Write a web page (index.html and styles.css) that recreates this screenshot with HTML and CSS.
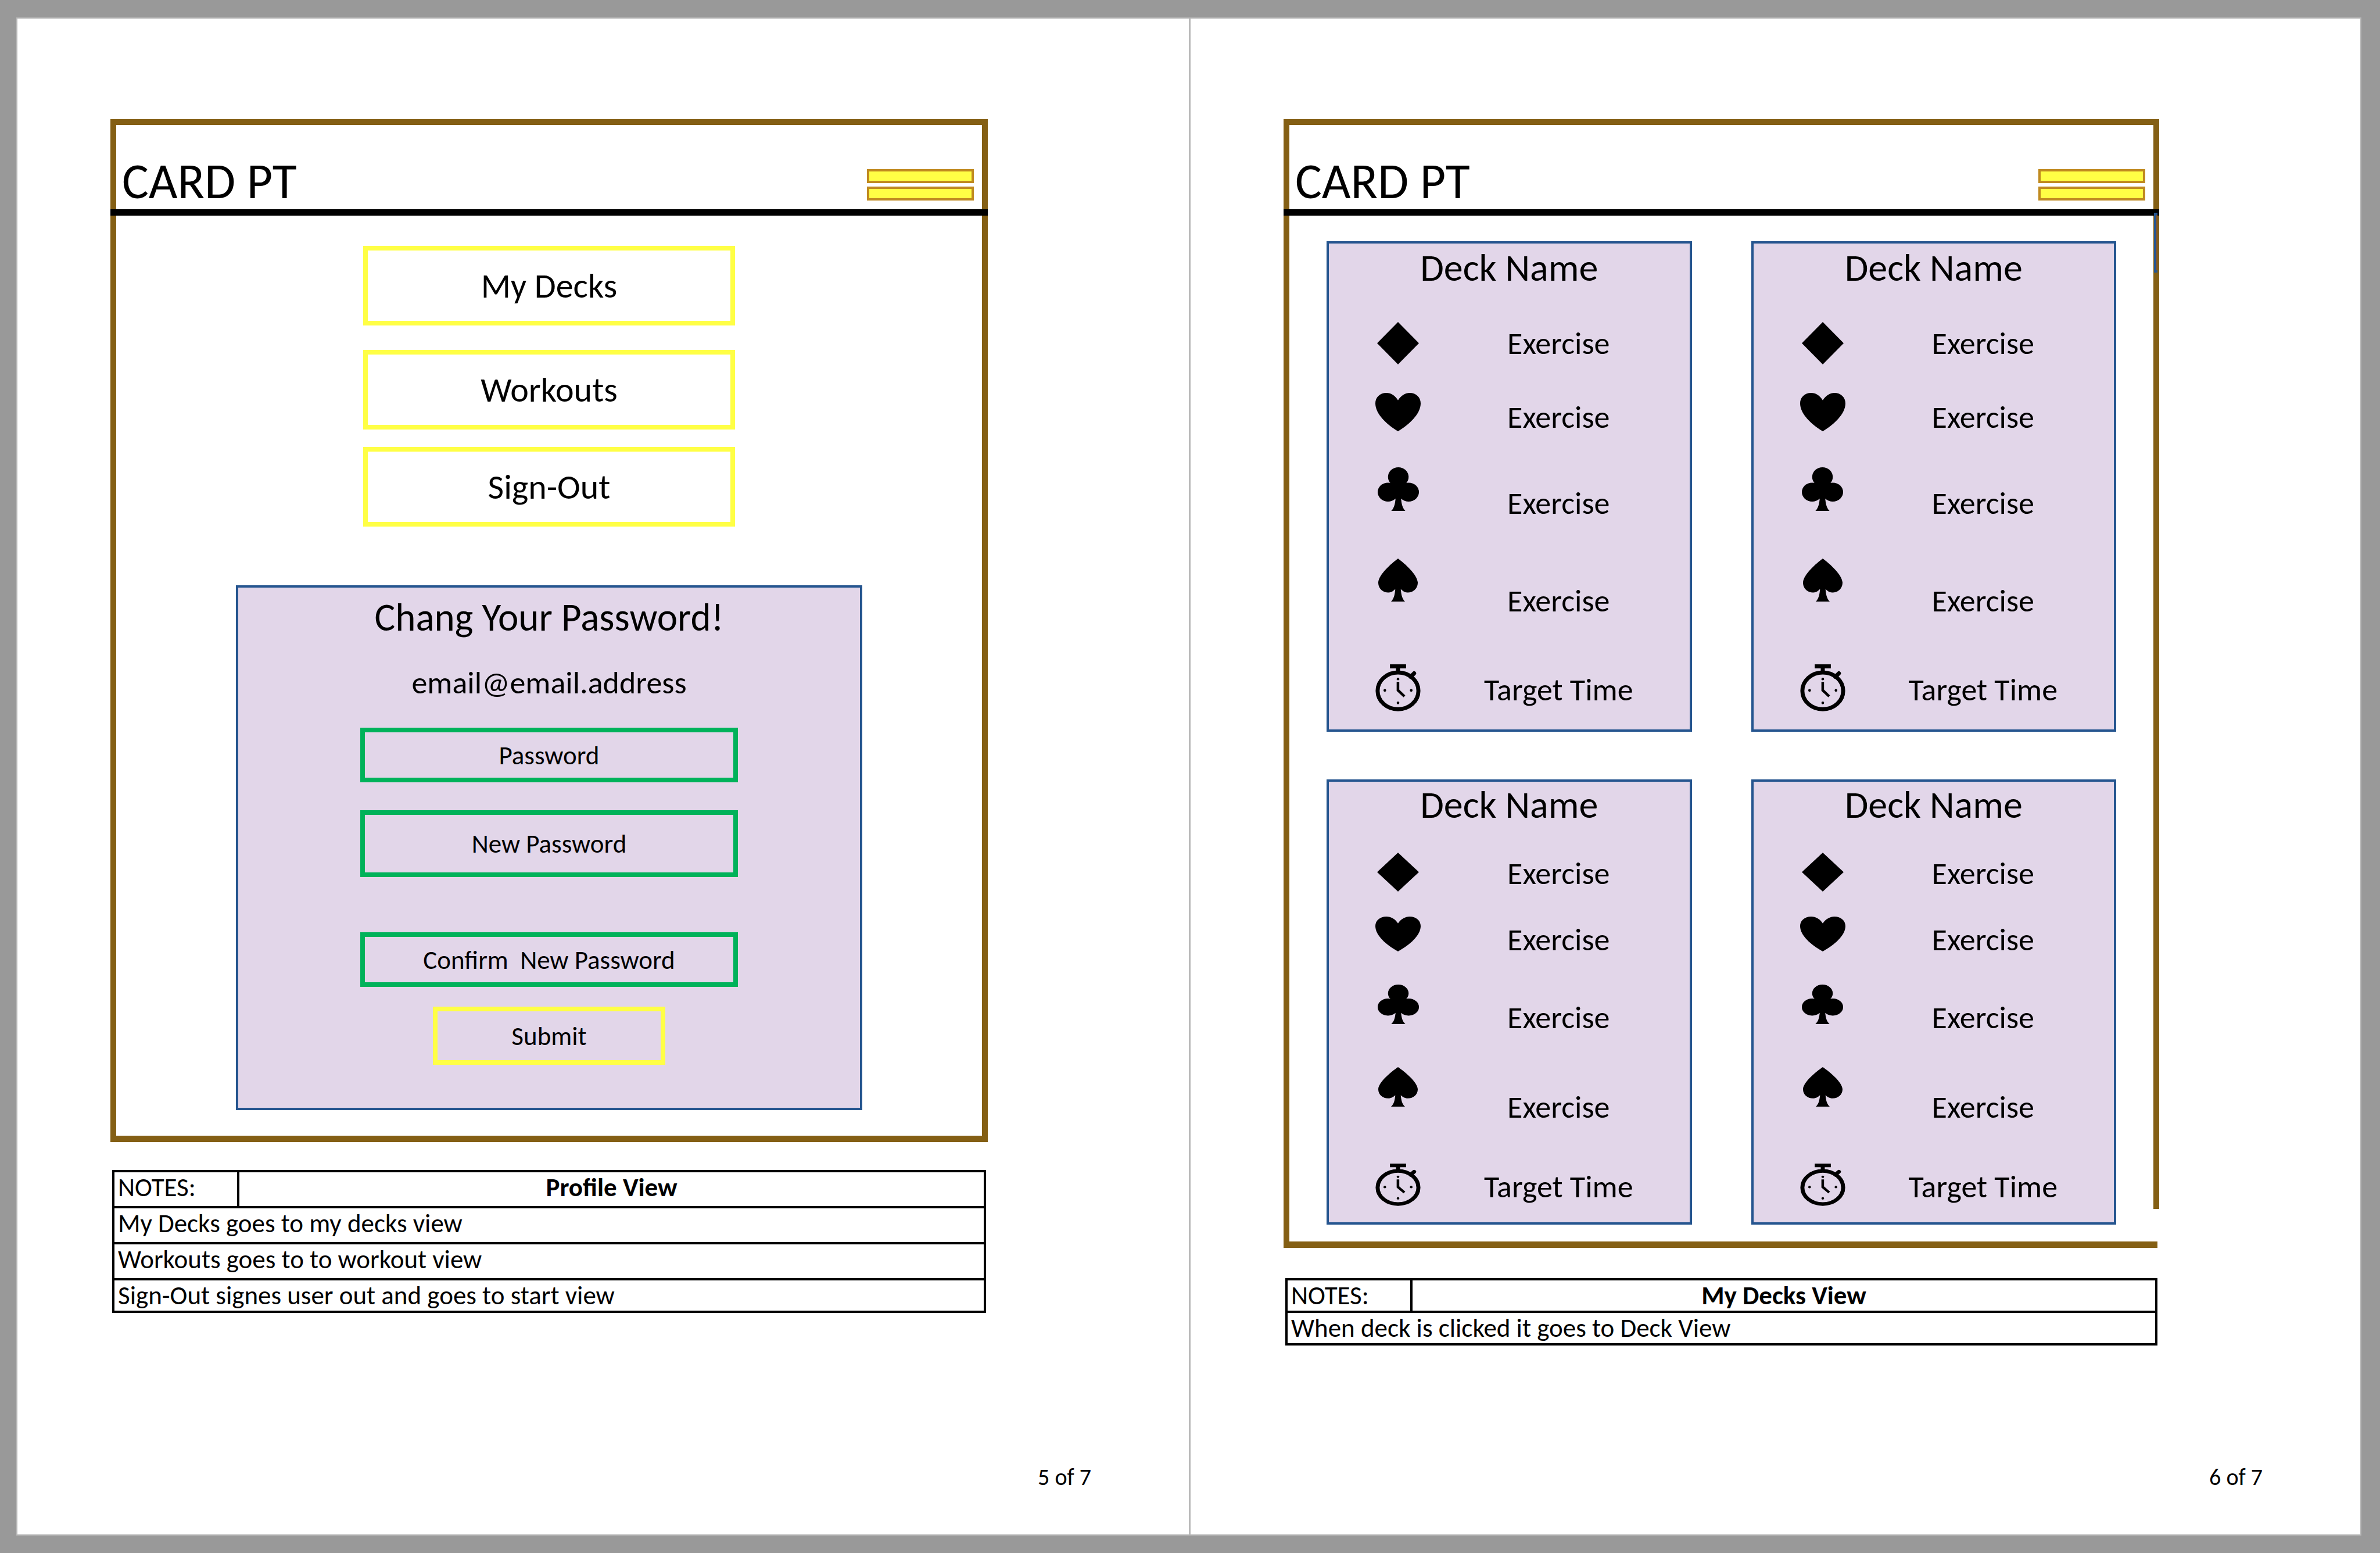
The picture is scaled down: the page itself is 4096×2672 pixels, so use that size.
FILE: index.html
```html
<!DOCTYPE html>
<html lang="en">
<head>
<meta charset="utf-8">
<title>Card PT</title>
<link rel="stylesheet" href="styles.css">
</head>
<body>
<svg class="defs" aria-hidden="true">
  <symbol id="diamond" viewBox="0 0 84 84" preserveAspectRatio="none"><path d="M42 0L84 42L42 84L0 42Z"/></symbol>
  <symbol id="heart" viewBox="0 0 90 77" preserveAspectRatio="none"><path d="M45 15C51 5 60 0 68 0C81 0 90 9 90 21C90 42 68 63 45 77C22 63 0 42 0 21C0 9 9 0 22 0C31 0 39 5 45 15Z"/></symbol>
  <symbol id="club" viewBox="0 0 82 87" preserveAspectRatio="none"><ellipse cx="41" cy="19.2" rx="20.500" ry="19.2"/><ellipse cx="20.500" cy="49.500" rx="20.500" ry="18.800"/><ellipse cx="61.500" cy="49.500" rx="20.500" ry="18.800"/><path d="M26 31H56L60 56L46.500 62.500C47.500 74 49.500 81 55 87H27C32.500 81 34.500 74 35.500 62.500L22 56Z"/></symbol>
  <symbol id="spade" viewBox="0 0 79 86" preserveAspectRatio="none"><path d="M39.500 0C53 10 78 32 79 48C79 60 70 68 59 68C53 68 49 65 45 61C46 73 48 81 53.500 86H25.500C31 81 33 73 34 61C30 65 26 68 20 68C9 68 0 60 0 48C1 32 26 10 39.500 0Z"/></symbol>
  <symbol id="watch" viewBox="0 0 90 94" preserveAspectRatio="none"><path d="M29 0H61V8H49V14H41V8H29Z"/><ellipse cx="45" cy="53" rx="40.500" ry="36.700" class="ring"/><path d="M70 25L77 18" class="knob"/><path d="M42.300 35H47.500V50.500L59.500 62L56 66L42.300 53Z"/><circle cx="45" cy="29.300" r="2.700"/><circle cx="45" cy="77" r="2.700"/><circle cx="18.800" cy="52" r="2.700"/><circle cx="71.200" cy="52" r="2.700"/></symbol>
</svg>

<main class="spread">
  <section class="page">
    <div class="sheet">
      <div class="frame">
        <header class="bar">
          <h1>CARD PT</h1>
          <button class="menu" type="button" aria-label="Menu"><span></span><span></span></button>
        </header>
        <div class="profile">
          <nav class="actions">
            <button class="action" type="button">My Decks</button>
            <button class="action" type="button">Workouts</button>
            <button class="action" type="button">Sign-Out</button>
          </nav>
          <form class="panel">
            <h2>Chang Your Password!</h2>
            <p class="email">email@email.address</p>
            <input class="field" type="password" aria-label="Password" placeholder="Password">
            <input class="field field-new" type="password" aria-label="New Password" placeholder="New Password">
            <input class="field" type="password" aria-label="Confirm New Password" placeholder="Confirm&nbsp; New Password">
            <button class="submit" type="button">Submit</button>
          </form>
        </div>
      </div>
      <table class="notes">
        <colgroup><col class="key"><col></colgroup>
        <tr class="tall"><td>NOTES:</td><th>Profile View</th></tr>
        <tr class="tall"><td colspan="2">My Decks goes to my decks view</td></tr>
        <tr class="tall"><td colspan="2">Workouts goes to to workout view</td></tr>
        <tr><td colspan="2">Sign-Out signes user out and goes to start view</td></tr>
      </table>
    </div>
    <footer>5 of 7</footer>
  </section>

  <section class="page">
    <div class="sheet">
      <div class="frame frame-open">
        <header class="bar">
          <h1>CARD PT</h1>
          <button class="menu" type="button" aria-label="Menu"><span></span><span></span></button>
        </header>
        <i class="marker"></i>
        <div class="decks">
          <article class="deck">
            <h2>Deck Name</h2>
            <ul>
              <li><svg class="diamond"><use href="#diamond"/></svg><span>Exercise</span></li>
              <li><svg class="heart"><use href="#heart"/></svg><span>Exercise</span></li>
              <li><svg class="club"><use href="#club"/></svg><span>Exercise</span></li>
              <li><svg class="spade"><use href="#spade"/></svg><span>Exercise</span></li>
              <li><svg class="watch"><use href="#watch"/></svg><span>Target Time</span></li>
            </ul>
          </article>
          <article class="deck">
            <h2>Deck Name</h2>
            <ul>
              <li><svg class="diamond"><use href="#diamond"/></svg><span>Exercise</span></li>
              <li><svg class="heart"><use href="#heart"/></svg><span>Exercise</span></li>
              <li><svg class="club"><use href="#club"/></svg><span>Exercise</span></li>
              <li><svg class="spade"><use href="#spade"/></svg><span>Exercise</span></li>
              <li><svg class="watch"><use href="#watch"/></svg><span>Target Time</span></li>
            </ul>
          </article>
          <article class="deck short">
            <h2>Deck Name</h2>
            <ul>
              <li><svg class="diamond"><use href="#diamond"/></svg><span>Exercise</span></li>
              <li><svg class="heart"><use href="#heart"/></svg><span>Exercise</span></li>
              <li><svg class="club"><use href="#club"/></svg><span>Exercise</span></li>
              <li><svg class="spade"><use href="#spade"/></svg><span>Exercise</span></li>
              <li><svg class="watch"><use href="#watch"/></svg><span>Target Time</span></li>
            </ul>
          </article>
          <article class="deck short">
            <h2>Deck Name</h2>
            <ul>
              <li><svg class="diamond"><use href="#diamond"/></svg><span>Exercise</span></li>
              <li><svg class="heart"><use href="#heart"/></svg><span>Exercise</span></li>
              <li><svg class="club"><use href="#club"/></svg><span>Exercise</span></li>
              <li><svg class="spade"><use href="#spade"/></svg><span>Exercise</span></li>
              <li><svg class="watch"><use href="#watch"/></svg><span>Target Time</span></li>
            </ul>
          </article>
        </div>
      </div>
      <table class="notes">
        <colgroup><col class="key"><col></colgroup>
        <tr><td>NOTES:</td><th>My Decks View</th></tr>
        <tr><td colspan="2">When deck is clicked it goes to Deck View</td></tr>
      </table>
    </div>
    <footer>6 of 7</footer>
  </section>
</main>
</body>
</html>
```

FILE: styles.css
```css
:root {
  --brown: #845f14;
  --yellow: #ffff45;
  --green: #00b25a;
  --blue: #25558f;
  --lilac: #e2d6e9;
}

* { box-sizing: border-box; }

body {
  margin: 0;
  padding: 30px 32px 30px 28px;
  background: #999;
  color: #000;
  font-family: Carlito, Lato, sans-serif;
  font-size: 45px;
}

h1, h2, p, ul { margin: 0; padding: 0; font-weight: 400; }
ul { list-style: none; }
button, input { font: inherit; color: inherit; background: none; padding: 0; border-radius: 0; }

.defs { position: absolute; width: 0; height: 0; }

.spread {
  display: grid;
  grid-template-columns: 1fr 1fr;
  min-height: calc(100vh - 60px);
  border: 2px solid #b8b8b8;
  background: #fff;
}

.page {
  display: flex;
  flex-direction: column;
  padding: 173px 168px 76px 160px;
}
.page + .page { border-left: 3px solid #b8b8b8; }

.sheet { margin-right: 178px; }

.frame {
  position: relative;
  border: 10px solid var(--brown);
  border-bottom-width: 11px;
}

.bar {
  display: flex;
  justify-content: space-between;
  align-items: flex-end;
  margin: 0 -10px;
  padding: 53px 24px 4px 20px;
  border-bottom: 11px solid #000;
}
.bar h1 { font-size: 86px; line-height: 88px; }

.menu { display: grid; gap: 6px; border: 0; width: 184px; margin-bottom: 11px; }
.menu span { height: 24px; border: 4px solid #c08a20; background: var(--yellow); }

.profile {
  display: flex;
  flex-direction: column;
  align-items: center;
  padding: 52px 0 44px;
}

.actions { display: flex; flex-direction: column; gap: 30px; width: 43%; margin-bottom: 101px; }
.action { height: 137px; border: 8px solid var(--yellow); font-size: 60px; }
.action:first-child { margin-bottom: 12px; }

.panel {
  display: flex;
  flex-direction: column;
  align-items: center;
  width: 1078px;
  max-width: 100%;
  padding: 11px 0 74px;
  border: 4px solid var(--blue);
  background: var(--lilac);
}
.panel h2 { font-size: 67px; line-height: 80px; }
.email { margin: 41px 0 45px; font-size: 54px; line-height: 64px; }
.field { width: 650px; height: 94px; border: 8px solid var(--green); text-align: center; }
.field::placeholder { color: #000; opacity: 1; white-space: pre; }
.field-new { height: 115px; margin: 48px 0 95px; }
.submit { width: 400px; height: 100px; margin-top: 34px; border: 8px solid var(--yellow); }

.notes {
  width: calc(100% - 6px);
  margin: 48px 3px 0;
  border-collapse: collapse;
  table-layout: fixed;
}
.frame-open + .notes { margin-top: 52px; }
.key { width: 215px; }
.notes tr { height: 56px; }
.notes .tall { height: 62px; }
.notes td, .notes th {
  padding: 0 6px;
  border: 4px solid #000;
  line-height: 52px;
  text-align: left;
  vertical-align: top;
}
.notes th { text-align: center; }

footer { margin-top: auto; font-size: 40px; line-height: 44px; text-align: right; }

/* The right rule stops short of the bottom one. */
.frame-open {
  clip-path: polygon(0 0, 100% 0, 100% calc(100% - 67px), calc(100% - 11px) calc(100% - 67px),
    calc(100% - 11px) calc(100% - 11px), calc(100% - 3px) calc(100% - 11px), calc(100% - 3px) 100%, 0 100%);
}
.marker {
  position: absolute;
  top: 151px;
  right: -7px;
  width: 6px;
  height: 103px;
  border: 4px solid var(--blue);
  border-right: 0;
  background: #84552a;
}

.decks {
  display: grid;
  grid-template-columns: 1fr 1fr;
  gap: 82px 102px;
  padding: 44px 64px 29px;
}
.deck {
  padding-top: 2px;
  border: 4px solid var(--blue);
  background: var(--lilac);
}
.deck h2 { font-size: 66px; line-height: 80px; text-align: center; }
.deck ul { display: grid; grid-template-rows: 122px 128px 157px 182px 112px; padding-top: 53px; }
.deck li {
  display: grid;
  grid-template-columns: 78px 1fr;
  column-gap: 72px;
  align-items: start;
  justify-items: center;
  padding: 0 60px 0 80px;
}
.deck li span { font-size: 54px; line-height: 64px; white-space: nowrap; }
.diamond { width: 72px; height: 73px; }
.heart { width: 78px; height: 66px; }
.club { width: 71px; height: 75px; }
.spade { width: 68px; height: 74px; }
.watch { width: 78px; height: 81px; }
.ring { fill: none; stroke: #000; stroke-width: 8px; }
.knob { stroke: #000; stroke-width: 8px; stroke-linecap: round; }
.diamond + span { margin-top: 5px; }
.heart + span { margin-top: 10px; }
.watch + span { margin-top: 12px; }
.club + span { margin-top: 30px; }
.spade + span { margin-top: 41px; }

.short { padding-top: 0; }
.short ul { grid-template-rows: 110px 117px 142px 166px 101px; padding-top: 42px; }
.short .diamond { height: 67px; }
.short .heart { height: 60px; }
.short .club, .short .spade { height: 68px; }
.short .watch { height: 73px; }
.short .diamond + span { margin-top: 4px; }
.short .heart + span, .short .watch + span { margin-top: 8px; }
.short .club + span { margin-top: 25px; }
.short .spade + span { margin-top: 37px; }
```
